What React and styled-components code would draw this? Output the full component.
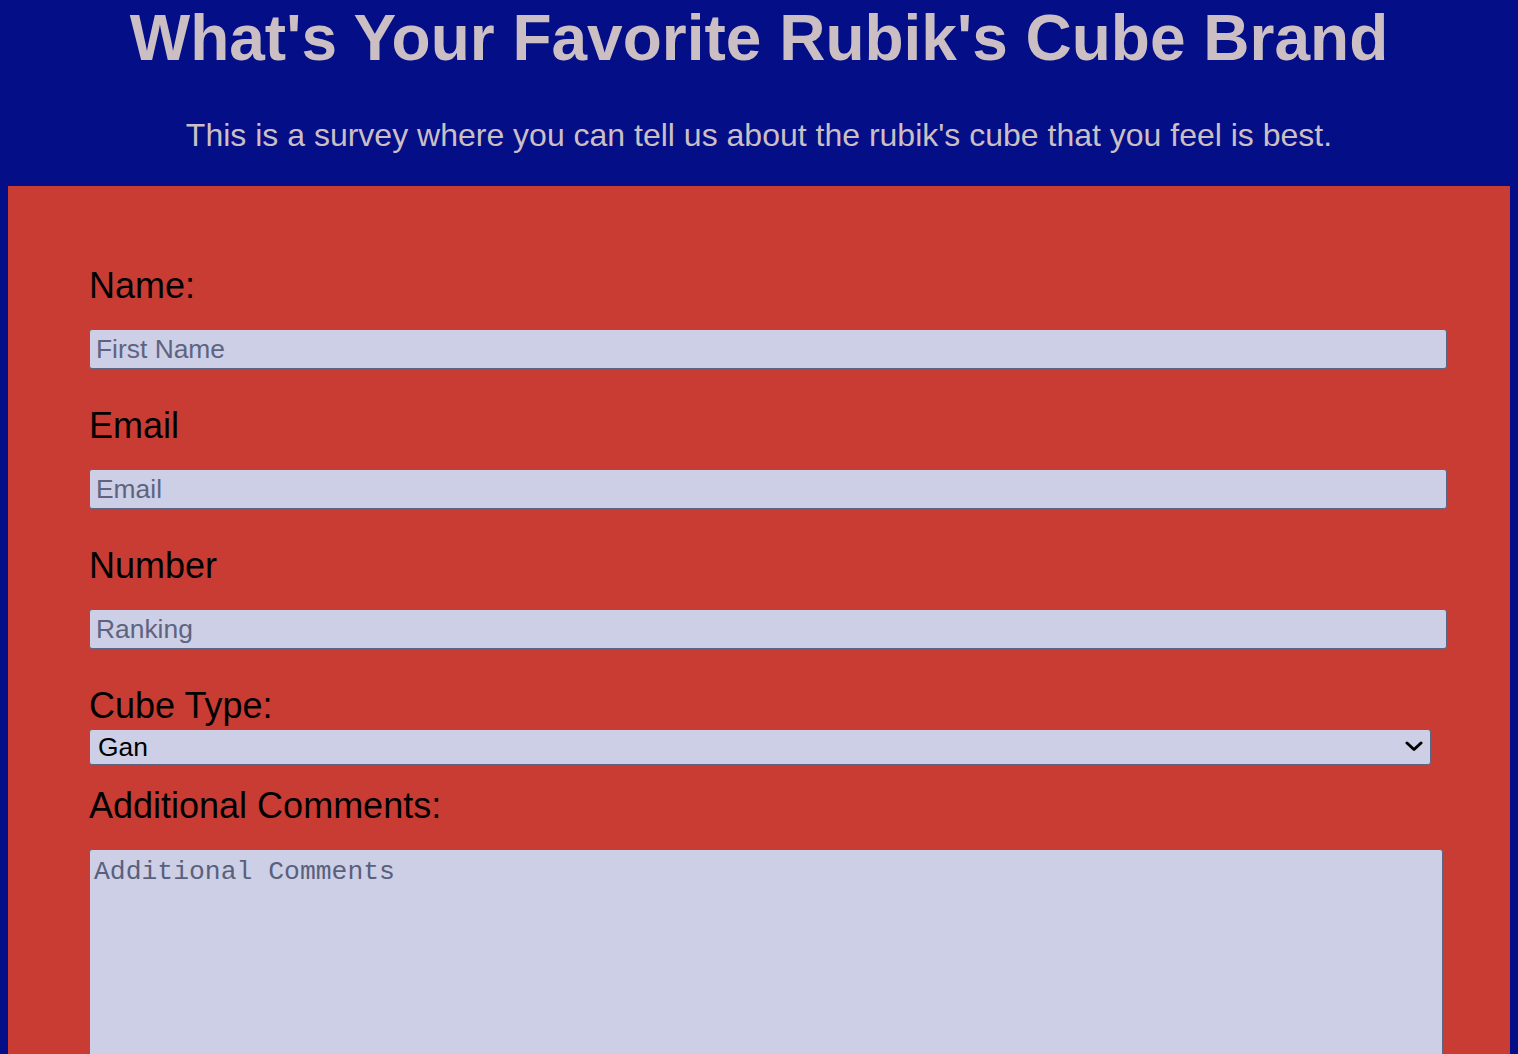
import React from 'react';
import styled, { createGlobalStyle } from 'styled-components';

const GlobalStyle = createGlobalStyle`
  html {
    scrollbar-width: none;
  }
  html::-webkit-scrollbar {
    display: none;
  }
  body {
    margin: 0;
    background: #030e87;
    font-family: 'Liberation Sans', Arial, Helvetica, sans-serif;
  }
`;

const App = () => {
  return (
    <Page>
      <GlobalStyle />
      <Header>
        <Title>What's Your Favorite Rubik's Cube Brand</Title>
        <Description>
          This is a survey where you can tell us about the rubik's cube that you feel is best.
        </Description>
      </Header>
      <SurveyForm onSubmit={(e) => e.preventDefault()}>
        <Field>
          <Label htmlFor="name">Name:</Label>
          <TextInput id="name" type="text" placeholder="First Name" />
        </Field>
        <Field>
          <Label htmlFor="email">Email</Label>
          <TextInput id="email" type="email" placeholder="Email" />
        </Field>
        <Field>
          <Label htmlFor="number">Number</Label>
          <TextInput id="number" type="number" placeholder="Ranking" />
        </Field>
        <Field tight>
          <Label htmlFor="dropdown">Cube Type:</Label>
          <SelectWrap>
            <Select id="dropdown" defaultValue="gan">
              <option value="gan">Gan</option>
              <option value="moyu">MoYu</option>
              <option value="qiyi">QiYi</option>
              <option value="yj">YJ</option>
            </Select>
            <Chevron viewBox="0 0 18 11" aria-hidden="true">
              <path d="M2 2 L9 8.5 L16 2" fill="none" stroke="#000" strokeWidth="3" strokeLinecap="round" strokeLinejoin="round" />
            </Chevron>
          </SelectWrap>
        </Field>
        <Field>
          <Label htmlFor="comments">Additional Comments:</Label>
          <Comments id="comments" placeholder="Additional Comments" />
        </Field>
      </SurveyForm>
    </Page>
  );
};

export default App;

const Page = styled.div`
  padding: 0 8px;
`;

const Header = styled.header`
  text-align: center;
  color: #cbbfc4;
  padding-bottom: 33px;
`;

const Title = styled.h1`
  margin: 0;
  font-size: 64px;
  line-height: 76px;
  font-weight: bold;
`;

const Description = styled.p`
  margin: 41px 0 0;
  font-size: 32px;
  line-height: 36px;
`;

const SurveyForm = styled.form`
  background: #c93c33;
  padding: 80px 81px 60px;
`;

const Field = styled.div`
  margin-bottom: ${(p) => (p.tight ? '21px' : '37px')};

  & > label {
    margin-bottom: ${(p) => (p.tight ? '3px' : '23px')};
  }
`;

const Label = styled.label`
  display: block;
  color: #000;
  font-size: 36px;
  line-height: 40px;
`;

const fieldBase = `
  display: block;
  box-sizing: border-box;
  background: #cdcfe6;
  border: 1px solid #5d6585;
  border-radius: 3px;
  color: #000;
  margin: 0;
  outline: none;
`;

const TextInput = styled.input`
  ${fieldBase}
  width: calc(100% + 18px);
  height: 40px;
  padding: 0 8px 0 6px;
  font-family: 'Liberation Sans', Arial, sans-serif;
  font-size: 26.4px;

  &::placeholder {
    color: #5e6480;
  }

  &::-webkit-outer-spin-button,
  &::-webkit-inner-spin-button {
    -webkit-appearance: none;
    margin: 0;
  }
`;

const SelectWrap = styled.div`
  position: relative;
  width: calc(100% + 2px);
`;

const Select = styled.select`
  ${fieldBase}
  appearance: none;
  width: 100%;
  height: 36px;
  padding: 0 40px 0 8px;
  font-family: 'Liberation Sans', Arial, sans-serif;
  font-size: 26.4px;
`;

const Chevron = styled.svg`
  position: absolute;
  right: 8px;
  top: 12px;
  width: 18px;
  height: 11px;
  pointer-events: none;
`;

const Comments = styled.textarea`
  ${fieldBase}
  width: calc(100% + 14px);
  height: 300px;
  padding: 7px 4px 4px;
  resize: vertical;
  font-family: 'Liberation Mono', 'Courier New', monospace;
  font-size: 26.4px;
  line-height: 30px;

  &::placeholder {
    color: #5a607c;
  }
`;
